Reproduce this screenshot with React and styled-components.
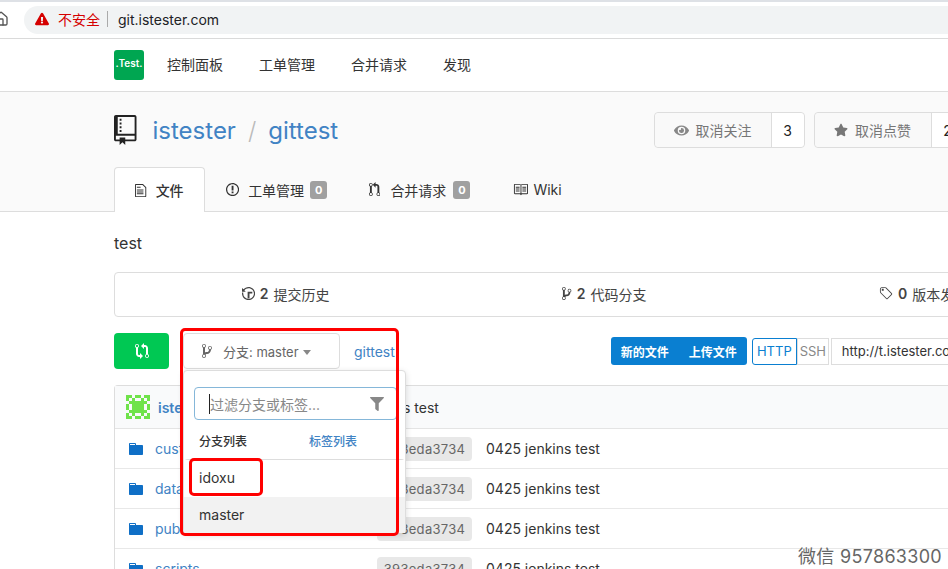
import React from "react";
import styled, { createGlobalStyle } from "styled-components";
import { FaEye, FaStar, FaFilter, FaExclamationTriangle } from "react-icons/fa";
import { Home } from "lucide-react";

const GlobalStyle = createGlobalStyle`
  html, body {
    margin: 0;
    padding: 0;
    width: 948px;
    height: 569px;
    overflow: hidden;
    background: #fff;
    font-family: Inter, "Noto Sans CJK SC", sans-serif;
    color: #333;
  }
  * { box-sizing: border-box; }
`;

const paths = {
  repo: "M4 9H3V8h1v1zm0-3H3v1h1V6zm0-2H3v1h1V4zm0-2H3v1h1V2zm8-1v12c0 .55-.45 1-1 1H6v2l-1.5-1.5L3 16v-2H1c-.55 0-1-.45-1-1V1c0-.55.45-1 1-1h10c.55 0 1 .45 1 1zm-1 10H1v2h2v-1h3v1h5v-2zm0-10H2v9h9V1z",
  branch: "M10 5c0-1.11-.89-2-2-2a1.993 1.993 0 0 0-1 3.72v.3c-.02.52-.23.98-.63 1.38-.4.4-.86.61-1.38.63-.83.02-1.48.16-2 .45V4.72a1.993 1.993 0 0 0-1-3.72C.88 1 0 1.89 0 3a2 2 0 0 0 1 1.72v6.56c-.59.35-1 .99-1 1.72 0 1.11.89 2 2 2 1.11 0 2-.89 2-2 0-.53-.2-1-.53-1.36.09-.06.48-.41.59-.47.25-.11.56-.17.94-.17 1.05-.05 1.95-.45 2.75-1.25S8.95 7.77 9 6.73h-.02C9.59 6.37 10 5.73 10 5zM2 1.8c.66 0 1.2.55 1.2 1.2 0 .65-.55 1.2-1.2 1.2C1.35 4.2.8 3.65.8 3c0-.65.55-1.2 1.2-1.2zm0 12.41c-.66 0-1.2-.55-1.2-1.2 0-.65.55-1.2 1.2-1.2.65 0 1.2.55 1.2 1.2 0 .65-.55 1.2-1.2 1.2zm6-8c-.66 0-1.2-.55-1.2-1.2 0-.65.55-1.2 1.2-1.2.65 0 1.2.55 1.2 1.2 0 .65-.55 1.2-1.2 1.2z",
  pull: "M11 11.28V5c-.03-.78-.34-1.47-.94-2.06C9.46 2.35 8.78 2.03 8 2H7V0L4 3l3 3V4h1c.27.02.48.11.69.31.21.2.3.42.31.69v6.28A1.993 1.993 0 0 0 10 15a1.993 1.993 0 0 0 1-3.72zm-1 2.92c-.66 0-1.2-.55-1.2-1.2 0-.65.55-1.2 1.2-1.2.65 0 1.2.55 1.2 1.2 0 .65-.55 1.2-1.2 1.2zM4 3c0-1.11-.89-2-2-2a1.993 1.993 0 0 0-1 3.72v6.56A1.993 1.993 0 0 0 2 15a1.993 1.993 0 0 0 1-3.72V4.72c.59-.34 1-.98 1-1.72zm-.8 10c0 .66-.55 1.2-1.2 1.2-.65 0-1.2-.55-1.2-1.2 0-.65.55-1.2 1.2-1.2.65 0 1.2.55 1.2 1.2zM2 4.2C1.34 4.2.8 3.65.8 3c0-.65.55-1.2 1.2-1.2.65 0 1.2.55 1.2 1.2 0 .65-.55 1.2-1.2 1.2z",
  compare: "M5 12H4c-.27-.02-.48-.11-.69-.31-.21-.2-.3-.42-.31-.69V4.72A1.993 1.993 0 0 0 2 1a1.993 1.993 0 0 0-1 3.72V11c.03.78.34 1.47.94 2.06.6.59 1.28.91 2.06.94h1v2l3-3-3-3v2zM2 1.8c.66 0 1.2.55 1.2 1.2 0 .65-.55 1.2-1.2 1.2C1.35 4.2.8 3.65.8 3c0-.65.55-1.2 1.2-1.2zm11 9.48V5c-.03-.78-.34-1.47-.94-2.06-.6-.59-1.28-.91-2.06-.94H9V0L6 3l3 3V4h1c.27.02.48.11.69.31.21.2.3.42.31.69v6.28A1.993 1.993 0 0 0 12 15a1.993 1.993 0 0 0 1-3.72zm-1 2.92c-.66 0-1.2-.55-1.2-1.2 0-.65.55-1.2 1.2-1.2.65 0 1.2.55 1.2 1.2 0 .65-.55 1.2-1.2 1.2z",
  issue: "M7 2.3c3.14 0 5.7 2.56 5.7 5.7s-2.56 5.7-5.7 5.7A5.71 5.71 0 0 1 1.3 8c0-3.14 2.56-5.7 5.7-5.7zM7 1C3.14 1 0 4.14 0 8s3.14 7 7 7 7-3.14 7-7-3.14-7-7-7zm1 3H6v5h2V4zm0 6H6v2h2v-2z",
  file: "M6 5H2V4h4v1zM2 8h7V7H2v1zm0 2h7V9H2v1zm0 2h7v-1H2v1zm10-7.5V14c0 .55-.45 1-1 1H1c-.55 0-1-.45-1-1V2c0-.55.45-1 1-1h7.5L12 4.5zM11 5L8 2H1v12h10V5z",
  book: "M3 5h4v1H3V5zm0 3h4V7H3v1zm0 2h4V9H3v1zm11-5h-4v1h4V5zm0 2h-4v1h4V7zm0 2h-4v1h4V9zm2-6v9c0 .55-.45 1-1 1H9.5l-1 1-1-1H2c-.55 0-1-.45-1-1V3c0-.55.45-1 1-1h5.5l1 1 1-1H15c.55 0 1 .45 1 1zm-8 .5L7.5 3H2v9h6V3.5zm7-.5H9.5l-.5.5V12h6V3z",
  history: "M8 13H6V6h5v2H8v5zM7 1C4.81 1 2.87 2.02 1.59 3.59L0 2v4h4L2.5 4.5C3.55 3.17 5.17 2.3 7 2.3c3.14 0 5.7 2.56 5.7 5.7s-2.56 5.7-5.7 5.7A5.71 5.71 0 0 1 1.3 8c0-.34.03-.67.09-1H.08C.03 7.33 0 7.66 0 8c0 3.86 3.14 7 7 7s7-3.14 7-7-3.14-7-7-7z",
  tag: "M7.73 1.73C7.26 1.26 6.62 1 5.96 1H3.5C2.13 1 1 2.13 1 3.5v2.47c0 .66.27 1.3.73 1.77l6.06 6.06c.39.39 1.02.39 1.41 0l4.59-4.59a.996.996 0 0 0 0-1.41L7.73 1.73zM2.38 7.09c-.31-.3-.47-.7-.47-1.13V3.5c0-.88.72-1.59 1.59-1.59h2.47c.42 0 .83.16 1.13.47l6.14 6.13-4.73 4.73-6.13-6.15zM3.01 3h2v2H3V3h.01z",
  folder: "M13 4H7V3c0-.66-.31-1-1-1H1c-.55 0-1 .45-1 1v10c0 .55.45 1 1 1h12c.55 0 1-.45 1-1V5c0-.55-.45-1-1-1zM6 4H1V3h5v1z",
};
const boxes = { repo: 12, branch: 10, pull: 12, compare: 14, issue: 14, file: 12, book: 16, history: 14, tag: 15, folder: 14 };

const Oct = ({ name, h = 16, color = "#333" }) => (
  <svg width={(boxes[name] * h) / 16} height={h} viewBox={`0 0 ${boxes[name]} 16`} fill={color} style={{ flex: "none" }}>
    <path d={paths[name]} />
  </svg>
);

const Page = styled.div`
  position: relative;
  width: 948px;
  height: 569px;
  overflow: hidden;
`;

const BrowserBar = styled.div`
  height: 39px;
  padding: 6px 0 0 24px;
  border-top: 2px solid #dee1e6;
  border-bottom: 1px solid #dadada;
  position: relative;
`;

const HomeIcon = styled.span`
  position: absolute;
  left: -7px;
  top: 9px;
  color: #555;
  display: flex;
`;

const Omnibox = styled.div`
  height: 28px;
  margin-top: -2px;
  padding: 0 0 2px 11px;
  background: #f1f3f4;
  border-radius: 14px 0 0 14px;
  display: flex;
  align-items: center;
`;

const Insecure = styled.span`
  color: #d50000;
  font-size: 14px;
  margin-left: 9px;
`;

const UrlBar = styled.span`
  width: 1px;
  height: 16px;
  background: #aaa;
  margin: 0 10px 0 7px;
`;

const Url = styled.span`
  font-size: 14px;
  color: #202124;
`;

const Nav = styled.div`
  height: 53px;
  padding-left: 114px;
  display: flex;
  align-items: center;
  border-bottom: 1px solid #ddd;
  font-size: 14px;
  color: #333;
`;

const Logo = styled.div`
  width: 30px;
  height: 30px;
  background: #00a651;
  border-radius: 3px;
  color: #fff;
  margin-right: 23px;
  font-size: 10px;
  font-weight: 600;
  text-align: center;
  line-height: 26px;
`;

const NavLink = styled.span`
  margin-right: 36px;
  line-height: 20px;
  margin-top: -1px;
`;

const Header = styled.div`
  height: 120px;
  background: #fafafa;
  border-bottom: 1px solid #ddd;
  padding: 20px 0 0 114px;
`;

const TitleRow = styled.div`
  display: flex;
  align-items: center;
  height: 36px;
`;

const RepoName = styled.div`
  flex: none;
  display: flex;
  align-items: center;
  margin-left: 16px;
  font-size: 24px;
  color: #4183c4;
  width: 501px;
  gap: 12px;
  span { color: #bbb; font-weight: 300; }
`;

const CountGroup = styled.div`
  display: flex;
  flex: none;
  height: 36px;
  margin-right: 9px;
  border: 1px solid #ddd;
  border-radius: 4px;
  font-size: 14px;
`;

const CountLabel = styled.div`
  width: 117px;
  display: flex;
  align-items: center;
  justify-content: center;
  gap: 7px;
  color: #767676;
  background: #f9f9f9;
  border-radius: 4px 0 0 4px;
  border-right: 1px solid #ddd;
`;

const CountValue = styled.div`
  width: 32px;
  background: #fff;
  border-radius: 0 4px 4px 0;
  display: flex;
  align-items: center;
  justify-content: center;
  color: #222;
`;

const Tabs = styled.div`
  display: flex;
  align-items: center;
  margin-top: 19px;
  height: 45px;
  font-size: 14px;
`;

const Tab = styled.div`
  display: flex;
  align-items: center;
  gap: ${(p) => p.$gap || 9}px;
  height: 45px;
  color: #333;
  ${(p) =>
    p.$active
      ? `
    width: 91px;
    justify-content: center;
    background: #fff;
    border: 1px solid #ddd;
    border-bottom: none;
    border-radius: 4px 4px 0 0;
    margin-right: 21px;
    font-weight: 500;
  `
      : `margin-right: ${p.$right || 42}px;`}
`;

const Badge = styled.span`
  width: 17px;
  text-align: center;
  background: #a0a0a0;
  color: #fff;
  font-size: 11px;
  font-weight: bold;
  padding: 2px 0;
  border-radius: 3px;
  margin-left: -3px;
  line-height: 14px;
`;

const Content = styled.div`
  padding-left: 114px;
  width: 1240px;
`;

const Description = styled.div`
  font-size: 16px;
  line-height: 20px;
  margin-top: 21px;
  color: #333;
`;

const Stats = styled.div`
  display: grid;
  grid-template-columns: repeat(4, 319px);
  padding: 0 11px 2px;
  height: 45px;
  margin-top: 19px;
  border: 1px solid #ddd;
  border-radius: 4px;
  font-size: 14px;
  width: 1127px;
`;

const Stat = styled.div`
  display: flex;
  align-items: center;
  justify-content: center;
  gap: 5px;
  color: #444;
  b { font-weight: 600; }
`;

const ActionRow = styled.div`
  display: flex;
  align-items: center;
  height: 36px;
  margin-top: 16px;
`;

const GreenButton = styled.div`
  width: 55px;
  height: 36px;
  background: #00c853;
  border-radius: 4px;
  display: flex;
  align-items: center;
  justify-content: center;
  margin-right: 14px;
`;

const BranchButton = styled.div`
  width: 157px;
  height: 36px;
  border: 1px solid #ddd;
  border-radius: 4px;
  display: flex;
  align-items: center;
  padding-left: 18px;
  font-size: 13px;
  color: #666;
  gap: 11px;
`;

const Caret = styled.i`
  display: inline-block;
  width: 0;
  height: 0;
  border-left: 4px solid transparent;
  border-right: 4px solid transparent;
  border-top: 5px solid #888;
  margin-left: 1px;
  vertical-align: 2px;
`;

const RepoLink = styled.span`
  font-size: 14px;
  color: #4183c4;
  margin-left: 14px;
`;

const BlueGroup = styled.div`
  display: flex;
  align-items: center;
  gap: 20px;
  margin-left: 216px;
  height: 28px;
  padding: 0 10px;
  background: #0a7fd1;
  color: #fff;
  border-radius: 3px;
  font-size: 12px;
  font-weight: 600;
`;

const Proto = styled.div`
  height: 27px;
  width: ${(p) => p.$w}px;
  display: flex;
  align-items: center;
  justify-content: center;
  font-size: 13px;
  margin-left: ${(p) => p.$ml || 0}px;
  color: ${(p) => (p.$on ? "#0a7fd1" : "#888")};
  border: 1px solid ${(p) => (p.$on ? "#0a7fd1" : "#ddd")};
  border-radius: ${(p) => (p.$on ? "3px 0 0 3px" : "0")};
`;

const CloneUrl = styled.div`
  height: 27px;
  width: 240px;
  margin-left: 2px;
  border: 1px solid #ddd;
  font-size: 13px;
  color: #333;
  padding-left: 10px;
  line-height: 25px;
`;

const FileTable = styled.div`
  width: 1127px;
  margin-top: 16px;
  border: 1px solid #ddd;
  border-radius: 4px 4px 0 0;
  border-bottom: none;
`;

const TableHead = styled.div`
  height: 43px;
  background: #f9fafb;
  display: flex;
  align-items: center;
  padding-left: 11px;
  border-bottom: 1px solid #e4e4e4;
  font-size: 14px;
`;

const HeadName = styled.span`
  color: #4183c4;
  font-weight: 600;
  margin-left: 8px;
  width: 167px;
`;

const FileRow = styled.div`
  height: 40px;
  display: flex;
  align-items: center;
  padding-left: 14px;
  border-bottom: 1px solid #e8e8e8;
  font-size: 14px;
`;

const FileName = styled.span`
  color: #4183c4;
  margin-left: 12px;
  width: 222px;
`;

const Hash = styled.span`
  width: 95px;
  height: 24px;
  background: #e8e8e8;
  border-radius: 4px;
  color: #666;
  font-size: 13px;
  letter-spacing: 0.3px;
  line-height: 24px;
  text-align: center;
  margin-right: 14px;
`;

const Dropdown = styled.div`
  position: absolute;
  left: 183px;
  top: 370px;
  width: 223px;
  height: 163px;
  background: #fff;
  border: 1px solid #ddd;
  border-radius: 4px;
  box-shadow: 0 2px 6px rgba(0, 0, 0, 0.15);
  font-size: 14px;
  padding-top: 16px;
`;

const FilterBox = styled.div`
  height: 33px;
  width: 203px;
  margin-left: 10px;
  border: 1px solid #85b7d9;
  border-radius: 4px;
  display: flex;
  align-items: center;
  justify-content: space-between;
  padding: 0 12px 0 14px;
  color: #888;
  font-size: 14px;
  span { border-left: 1px solid #222; }
`;

const ListTabs = styled.div`
  display: flex;
  height: 39px;
  align-items: center;
  padding: 1px 0 0 15px;
  font-size: 12px;
  font-weight: 500;
  color: #333;
  gap: 62px;
  em { font-style: normal; color: #4183c4; }
`;

const BranchList = styled.div`
  border-top: 1px solid #ddd;
  border-radius: 4px 4px 0 0;
`;

const BranchItem = styled.div`
  height: ${(p) => p.$h}px;
  padding: 0 0 2px 15px;
  display: flex;
  align-items: center;
  font-size: 14px;
  color: #333;
  background: ${(p) => (p.$on ? "#f2f2f2" : "#fff")};
`;

const RedBox = styled.div`
  position: absolute;
  left: ${(p) => p.$x}px;
  top: ${(p) => p.$y}px;
  width: ${(p) => p.$w}px;
  height: ${(p) => p.$h}px;
  border: 3px solid #f00;
  border-radius: 5px;
`;

const Watermark = styled.div`
  position: absolute;
  right: 6px;
  bottom: 1px;
  font-size: 18px;
  line-height: 22px;
  color: #666;
  letter-spacing: 0.3px;
`;

const cells = [
  [0,0],[1,0],[3,0],[4,0],[6,0],[7,0],[0,1],[2,1],[5,1],[7,1],[1,2],[2,2],[3,2],[4,2],[5,2],[6,2],
  [0,3],[2,3],[3,3],[4,3],[5,3],[7,3],[0,4],[2,4],[3,4],[4,4],[5,4],[7,4],[1,5],[2,5],[3,5],[4,5],[5,5],[6,5],
  [0,6],[2,6],[5,6],[7,6],[0,7],[1,7],[3,7],[4,7],[6,7],[7,7],
];

const Avatar = () => (
  <svg width="24" height="24" viewBox="0 0 8 8" style={{ flex: "none" }}>
    {cells.map(([x, y]) => (
      <rect key={`${x}-${y}`} x={x} y={y} width="1" height="1" fill="#6fe34a" />
    ))}
  </svg>
);

const files = ["custom", "data", "public", "scripts"];

export default function App() {
  return (
    <Page>
      <GlobalStyle />
      <BrowserBar>
        <HomeIcon>
          <Home size={16} strokeWidth={2} />
        </HomeIcon>
        <Omnibox>
          <FaExclamationTriangle size={14} color="#d50000" />
          <Insecure>不安全</Insecure>
          <UrlBar />
          <Url>git.istester.com</Url>
        </Omnibox>
      </BrowserBar>
      <Nav>
        <Logo>.Test.</Logo>
        <NavLink>控制面板</NavLink>
        <NavLink>工单管理</NavLink>
        <NavLink>合并请求</NavLink>
        <NavLink>发现</NavLink>
      </Nav>
      <Header>
        <TitleRow>
          <Oct name="repo" h={30} color="#222" />
          <RepoName>
            istester <span>/</span> gittest
          </RepoName>
          <CountGroup>
            <CountLabel>
              <FaEye size={15} color="#888" /> 取消关注
            </CountLabel>
            <CountValue>3</CountValue>
          </CountGroup>
          <CountGroup>
            <CountLabel>
              <FaStar size={14} color="#777" /> 取消点赞
            </CountLabel>
            <CountValue>2</CountValue>
          </CountGroup>
        </TitleRow>
        <Tabs>
          <Tab $active>
            <Oct name="file" h={15} /> 文件
          </Tab>
          <Tab>
            <Oct name="issue" h={15} /> 工单管理 <Badge>0</Badge>
          </Tab>
          <Tab $gap={10} $right={43}>
            <Oct name="pull" h={15} /> 合并请求 <Badge>0</Badge>
          </Tab>
          <Tab $gap={5}>
            <Oct name="book" h={15} /> Wiki
          </Tab>
        </Tabs>
      </Header>
      <Content>
        <Description>test</Description>
        <Stats>
          <Stat>
            <Oct name="history" h={15} color="#444" /> <b>2</b> 提交历史
          </Stat>
          <Stat>
            <Oct name="branch" h={15} color="#444" /> <b>2</b> 代码分支
          </Stat>
          <Stat>
            <Oct name="tag" h={15} color="#444" /> <b>0</b> 版本发布
          </Stat>
        </Stats>
        <ActionRow>
          <GreenButton>
            <Oct name="compare" h={16} color="#fff" />
          </GreenButton>
          <BranchButton>
            <Oct name="branch" h={16} color="#666" />
            <span>
              分支: master <Caret />
            </span>
          </BranchButton>
          <RepoLink>gittest</RepoLink>
          <BlueGroup>
            <span>新的文件</span>
            <span>上传文件</span>
          </BlueGroup>
          <Proto $w={45} $ml={5} $on>
            HTTP
          </Proto>
          <Proto $w={32}>SSH</Proto>
          <CloneUrl>http://t.istester.com/istester/gittest.git</CloneUrl>
        </ActionRow>
        <FileTable>
          <TableHead>
            <Avatar />
            <HeadName>istester</HeadName>
            <span>0425 jenkins test</span>
          </TableHead>
          {files.map((f) => (
            <FileRow key={f}>
              <Oct name="folder" h={16} color="#0f6fc6" />
              <FileName>{f}</FileName>
              <Hash>393eda3734</Hash>
              <span>0425 jenkins test</span>
            </FileRow>
          ))}
        </FileTable>
      </Content>
      <Dropdown>
        <FilterBox>
          <span>过滤分支或标签...</span>
          <FaFilter size={14} color="#888" />
        </FilterBox>
        <ListTabs>
          <span>分支列表</span>
          <em>标签列表</em>
        </ListTabs>
        <BranchList>
          <BranchItem $h={37}>idoxu</BranchItem>
          <BranchItem $h={36} $on>
            master
          </BranchItem>
        </BranchList>
      </Dropdown>
      <RedBox $x={180} $y={328} $w={219} $h={208} />
      <RedBox $x={189} $y={458} $w={74} $h={38} />
      <Watermark>微信 957863300</Watermark>
    </Page>
  );
}
